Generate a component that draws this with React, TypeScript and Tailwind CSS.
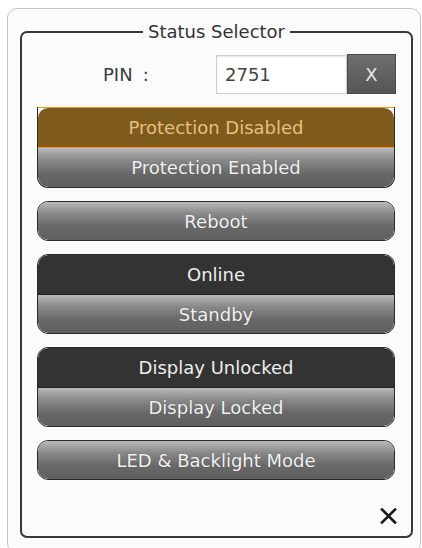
import React from "react";

const font = { fontFamily: '"DejaVu Sans", Verdana, sans-serif' };

function GrayButton({ label, rounded, h = "h-[38px]" }: { label: string; rounded: "all" | "bottom"; h?: string }) {
  const r = rounded === "all" ? "rounded-[10px]" : "rounded-b-[10px]";
  return (
    <div
      className={`${h} flex items-center justify-center text-[18px] text-[#f2f2f2] bg-[linear-gradient(to_bottom,#b8b8b8_0%,#8a8a8a_30%,#686868_65%,#5f5f5f_100%)] ${r}`}
      style={{ textShadow: "0 0 1px rgba(0,0,0,0.35)" }}
    >
      {label}
    </div>
  );
}

function DarkButton({ label }: { label: string }) {
  return (
    <div className="h-[40px] flex items-center justify-center text-[18px] text-[#eeeeee] bg-[#333333] rounded-t-[10px] border-b border-[#222]">
      {label}
    </div>
  );
}

function Group({ children }: { children: React.ReactNode }) {
  return (
    <div className="rounded-[11px] border border-[#2a2a2a] bg-[#fafafa] overflow-hidden">{children}</div>
  );
}

export default function App() {
  return (
    <div className="w-[422px] h-[548px] bg-white overflow-hidden pt-[8px] pl-[7px]" style={font}>
      <div className="w-[414px] h-[545px] rounded-[10px] border border-[#c4c4c4] bg-[#fbfbfb] pl-[12px] pt-[12px]">
        <fieldset className="w-[393px] h-[517px] border-2 border-[#383838] rounded-[7px] flex flex-col">
          <legend className="mx-auto px-[5px] text-[18px] leading-[22px] text-[#333]">Status Selector</legend>

          {/* PIN entry row */}
          <div className="flex items-center mt-[11px] h-[40px]">
            <span className="ml-[81px] w-[113px] text-[18px] text-[#3a3a3a]">
              PIN<span className="ml-[10px]">:</span>
            </span>
            <div className="w-[131px] h-[39px] border border-[#cfcfcf] bg-white shadow-[inset_0_1px_2px_rgba(0,0,0,0.12)] flex items-center pl-[8px] text-[18px] text-[#444]">
              2751
            </div>
            <div className="w-[49px] h-[40px] flex items-center justify-center bg-[linear-gradient(to_bottom,#6e6e6e,#555555)] border border-[#4a4a4a] text-[18px] text-[#e6e6e6]">
              X
            </div>
          </div>

          <div className="ml-[15px] w-[358px] mt-[13px] flex flex-col gap-[13px]">
            <div className="rounded-b-[11px] overflow-hidden border-x border-b border-[#2a2a2a]">
              <div className="h-[41px] border border-[#f19a2a] -mx-px bg-[#fbfbfb]">
                <div className="h-full rounded-t-[10px] bg-[#7f5a1d] flex items-center justify-center text-[18px] text-[#e3c082]">
                  Protection Disabled
                </div>
              </div>
              <GrayButton label="Protection Enabled" rounded="bottom" h="h-[39px]" />
            </div>

            <Group>
              <GrayButton label="Reboot" rounded="all" />
            </Group>

            <Group>
              <DarkButton label="Online" />
              <GrayButton label="Standby" rounded="bottom" />
            </Group>

            <Group>
              <DarkButton label="Display Unlocked" />
              <GrayButton label="Display Locked" rounded="bottom" />
            </Group>

            <Group>
              <GrayButton label="LED & Backlight Mode" rounded="all" />
            </Group>
          </div>

          <div className="flex justify-end mt-[28px] mr-[14px]">
            <svg width="17" height="16" viewBox="0 0 17 16">
              <path d="M2 1.5 L15 14.5 M15 1.5 L2 14.5" stroke="#1a1a1a" strokeWidth="2.6" strokeLinecap="square" />
            </svg>
          </div>
        </fieldset>
      </div>
    </div>
  );
}
